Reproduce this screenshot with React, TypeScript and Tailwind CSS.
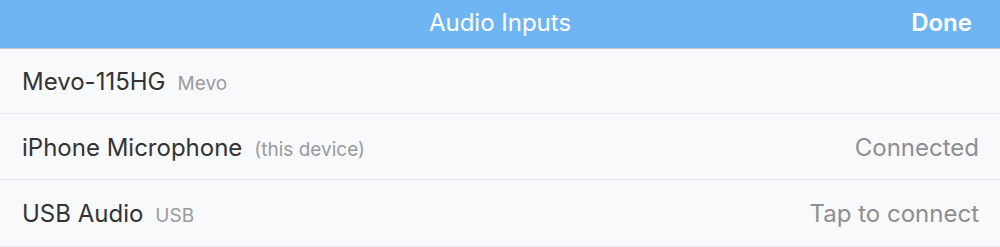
const rows = [
  { name: "Mevo-115HG", tag: "Mevo", status: "", h: "h-[65px]" },
  { name: "iPhone Microphone", tag: "(this device)", status: "Connected", h: "h-[66px]" },
  { name: "USB Audio", tag: "USB", status: "Tap to connect", h: "h-[67px]" },
];

export default function App() {
  return (
    <div className="w-[1000px] h-[247px] bg-[#f8f9fb] overflow-hidden font-['Inter','Noto_Sans',sans-serif]">
      {/* Nav bar */}
      <div className="relative h-[49px] bg-[#6fb5f3] border-b border-[#c4c9cf] flex items-center justify-center">
        <span className="text-white text-[24px] -mt-[2px]">Audio Inputs</span>
        <button className="absolute right-[28px] top-0 h-[46px] text-white text-[24px] font-semibold">
          Done
        </button>
      </div>

      {/* List */}
      <div>
        {rows.map((r) => (
          <div
            key={r.name}
            className={`${r.h} border-b border-[#e6e7ea] flex items-center justify-between pl-[22px] pr-[21px] pt-[2px]`}
          >
            <div className="flex items-baseline gap-[12px]">
              <span className="text-[24px] text-[#333333]">{r.name}</span>
              <span className="text-[19px] text-[#9a9a9e]">{r.tag}</span>
            </div>
            {r.status && <span className="text-[24px] text-[#8e8e93]">{r.status}</span>}
          </div>
        ))}
      </div>
    </div>
  );
}
